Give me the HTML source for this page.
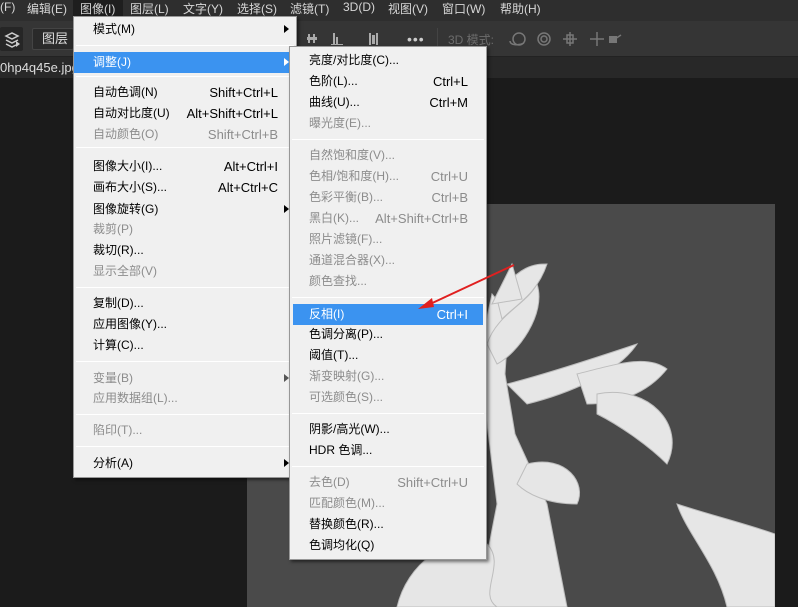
<!DOCTYPE html>
<html><head><meta charset="utf-8"><style>
*{margin:0;padding:0;box-sizing:border-box}
body{width:798px;height:607px;overflow:hidden;background:#1b1b1b;position:relative;font-family:"Liberation Sans","Noto Sans CJK SC",sans-serif;font-size:12px}
.abs{position:absolute}
#mb{left:0;top:0;width:798px;height:21px;background:#2e2e2e;color:#d6d6d6}
#mb span{position:absolute;top:0px;font-size:12px;white-space:nowrap}
#tb{left:0;top:21px;width:798px;height:36px;background:#353535;border-bottom:1px solid #222}
#tab{left:0;top:57px;width:798px;height:21px;background:#282828;color:#ddd}
.menu{background:#f0f0f0;border:1px solid #979797;box-shadow:2px 2px 3px rgba(0,0,0,.5)}
.it{position:absolute;left:0;right:0;height:21px;line-height:21px;color:#000;white-space:nowrap}
.it .l{position:absolute;left:19px}
.it .r{position:absolute;right:18px;font-size:13px}
.d{color:#8c8c8c}
.hl{background:#3b93f0;color:#fff}
.sep{position:absolute;left:2px;right:2px;height:1px;background:#c8c8c8;border-bottom:1px solid #fff}
.arr{position:absolute;right:7px;top:6px;width:0;height:0;border-left:5px solid #000;border-top:4px solid transparent;border-bottom:4px solid transparent}
.hl .arr{border-left-color:#fff}
</style></head><body>
<div id="mb" class="abs">
<span style="left:0">(F)</span><span style="left:27px">编辑(E)</span>
<div class="abs" style="left:73px;top:0;width:50px;height:21px;background:#1e1e1e"></div>
<span style="left:80px">图像(I)</span><span style="left:130px">图层(L)</span><span style="left:183px">文字(Y)</span><span style="left:237px">选择(S)</span><span style="left:290px">滤镜(T)</span><span style="left:343px">3D(D)</span><span style="left:388px">视图(V)</span><span style="left:442px">窗口(W)</span><span style="left:500px">帮助(H)</span>
</div>
<div id="tb" class="abs">
<div class="abs" style="left:0;top:6px;width:23px;height:24px;background:#262626;border-radius:2px"></div>
<svg class="abs" style="left:3px;top:10px" width="18" height="18"><path d="M3 5l6-3 6 3-6 3z M3 9l6 3 6-3 M3 13l6 3 4-2" fill="none" stroke="#ccc" stroke-width="1.5"/><path d="M13 10l4 3-4 3z" fill="#ccc"/></svg>
<div class="abs" style="left:32px;top:7px;width:42px;height:22px;background:#2a2a2a;border:1px solid #444;border-radius:2px;color:#ddd;font-size:13px;line-height:20px;padding-left:9px">图层</div>
<svg class="abs" style="left:305px;top:10px" width="80" height="16"><g fill="#aaa"><rect x="2" y="6" width="10" height="3"/><rect x="3" y="3" width="2" height="9"/><rect x="8" y="3" width="2" height="9"/><rect x="28" y="2" width="2" height="11"/><rect x="31" y="6" width="2" height="7"/><rect x="26" y="13" width="12" height="1"/><rect x="64" y="2" width="2" height="12"/><rect x="71" y="2" width="2" height="12"/><rect x="67" y="4" width="3" height="9"/></g></svg>
<div class="abs" style="left:407px;top:10px;color:#ccc;font-size:14px;letter-spacing:1px">•••</div>
<div class="abs" style="left:437px;top:7px;width:1px;height:22px;background:#444"></div>
<div class="abs" style="left:448px;top:10px;color:#6c6c6c;font-size:12px">3D 模式:</div>
<svg class="abs" style="left:507px;top:9px" width="130" height="18"><g fill="none" stroke="#777" stroke-width="1.5"><circle cx="12" cy="9" r="6"/><path d="M3 11c0 4 8 5 14 2"/><circle cx="37" cy="9" r="6"/><circle cx="37" cy="9" r="3"/><path d="M63 2v14M56 9h14M60 5h6v8h-6z"/><path d="M90 2v14M83 9h14"/><path d="M108 9l6-4"/></g><rect x="102" y="6" width="8" height="7" fill="#777"/></svg>
</div>
<div id="tab" class="abs"><span class="abs" style="left:0;top:3px;font-size:13px;color:#ddd">0hp4q45e.jpg</span></div>

<!-- canvas image -->
<svg class="abs" style="left:247px;top:204px" width="528" height="403">
<rect width="528" height="403" fill="#4a4a4a"/>
<g fill="#e6e6e6" stroke="#bdbdbd">
<path d="M230 403 L250 300 L240 220 L232 150 L245 90 L262 110 L258 170 L268 230 L300 300 L320 403 Z"/>
<path d="M150 403 C160 360 200 330 240 340 C260 360 230 390 250 403 Z"/>
<path d="M240 140 C250 110 280 100 290 80 C300 110 270 150 250 160 Z"/>
<path d="M260 180 C300 170 360 150 390 140 C370 170 320 190 280 200 Z"/>
<path d="M330 170 C370 160 400 150 420 165 C400 190 370 200 340 200 Z"/>
<path d="M280 260 C320 250 340 280 330 300 C300 300 280 290 270 280 Z"/>
<path d="M250 95 C270 60 290 60 300 60 C290 90 270 100 255 115 Z"/>
<path d="M245 100 L265 60 L275 95 Z"/>
<path d="M430 300 C460 310 500 320 528 330 L528 403 L480 403 C470 360 440 330 430 300 Z"/>
<path d="M350 190 C400 180 440 220 420 260 C400 240 370 220 350 210 Z"/>
</g>
</svg>

<!-- main menu -->
<div class="abs menu" style="left:73px;top:16px;width:224px;height:462px">
<div class="it" style="top:2px"><span class="l">模式(M)</span><i class="arr"></i></div>
<div class="sep" style="top:28px"></div>
<div class="it hl" style="top:35px"><span class="l">调整(J)</span><i class="arr"></i></div>
<div class="sep" style="top:59px"></div>
<div class="it" style="top:65px"><span class="l">自动色调(N)</span><span class="r">Shift+Ctrl+L</span></div>
<div class="it" style="top:86px"><span class="l">自动对比度(U)</span><span class="r">Alt+Shift+Ctrl+L</span></div>
<div class="it d" style="top:107px"><span class="l">自动颜色(O)</span><span class="r">Shift+Ctrl+B</span></div>
<div class="sep" style="top:130px"></div>
<div class="it" style="top:139px"><span class="l">图像大小(I)...</span><span class="r">Alt+Ctrl+I</span></div>
<div class="it" style="top:160px"><span class="l">画布大小(S)...</span><span class="r">Alt+Ctrl+C</span></div>
<div class="it" style="top:182px"><span class="l">图像旋转(G)</span><i class="arr"></i></div>
<div class="it d" style="top:202px"><span class="l">裁剪(P)</span></div>
<div class="it" style="top:223px"><span class="l">裁切(R)...</span></div>
<div class="it d" style="top:244px"><span class="l">显示全部(V)</span></div>
<div class="sep" style="top:270px"></div>
<div class="it" style="top:276px"><span class="l">复制(D)...</span></div>
<div class="it" style="top:297px"><span class="l">应用图像(Y)...</span></div>
<div class="it" style="top:318px"><span class="l">计算(C)...</span></div>
<div class="sep" style="top:344px"></div>
<div class="it d" style="top:351px"><span class="l">变量(B)</span><i class="arr" style="border-left-color:#555"></i></div>
<div class="it d" style="top:371px"><span class="l">应用数据组(L)...</span></div>
<div class="sep" style="top:397px"></div>
<div class="it d" style="top:403px"><span class="l">陷印(T)...</span></div>
<div class="sep" style="top:429px"></div>
<div class="it" style="top:436px"><span class="l">分析(A)</span><i class="arr"></i></div>
</div>

<!-- submenu -->
<div class="abs menu" style="left:289px;top:46px;width:198px;height:514px">
<div class="it" style="top:3px"><span class="l">亮度/对比度(C)...</span></div>
<div class="it" style="top:24px"><span class="l">色阶(L)...</span><span class="r">Ctrl+L</span></div>
<div class="it" style="top:45px"><span class="l">曲线(U)...</span><span class="r">Ctrl+M</span></div>
<div class="it d" style="top:66px"><span class="l">曝光度(E)...</span></div>
<div class="sep" style="top:92px"></div>
<div class="it d" style="top:98px"><span class="l">自然饱和度(V)...</span></div>
<div class="it d" style="top:119px"><span class="l">色相/饱和度(H)...</span><span class="r">Ctrl+U</span></div>
<div class="it d" style="top:140px"><span class="l">色彩平衡(B)...</span><span class="r">Ctrl+B</span></div>
<div class="it d" style="top:161px"><span class="l">黑白(K)...</span><span class="r">Alt+Shift+Ctrl+B</span></div>
<div class="it d" style="top:182px"><span class="l">照片滤镜(F)...</span></div>
<div class="it d" style="top:203px"><span class="l">通道混合器(X)...</span></div>
<div class="it d" style="top:224px"><span class="l">颜色查找...</span></div>
<div class="sep" style="top:250px"></div>
<div class="it hl" style="top:257px;left:3px;right:3px"><span class="l" style="left:16px">反相(I)</span><span class="r" style="right:15px">Ctrl+I</span></div>
<div class="it" style="top:277px"><span class="l">色调分离(P)...</span></div>
<div class="it" style="top:298px"><span class="l">阈值(T)...</span></div>
<div class="it d" style="top:319px"><span class="l">渐变映射(G)...</span></div>
<div class="it d" style="top:340px"><span class="l">可选颜色(S)...</span></div>
<div class="sep" style="top:366px"></div>
<div class="it" style="top:372px"><span class="l">阴影/高光(W)...</span></div>
<div class="it" style="top:393px"><span class="l">HDR 色调...</span></div>
<div class="sep" style="top:419px"></div>
<div class="it d" style="top:425px"><span class="l">去色(D)</span><span class="r">Shift+Ctrl+U</span></div>
<div class="it d" style="top:446px"><span class="l">匹配颜色(M)...</span></div>
<div class="it" style="top:467px"><span class="l">替换颜色(R)...</span></div>
<div class="it" style="top:488px"><span class="l">色调均化(Q)</span></div>
</div>
<svg class="abs" style="left:410px;top:260px" width="110" height="55"><path d="M104 5 L18 45" stroke="#e02020" stroke-width="2"/><path d="M8 49 L22 38 L24 47 Z" fill="#e02020"/></svg>
</body></html>
